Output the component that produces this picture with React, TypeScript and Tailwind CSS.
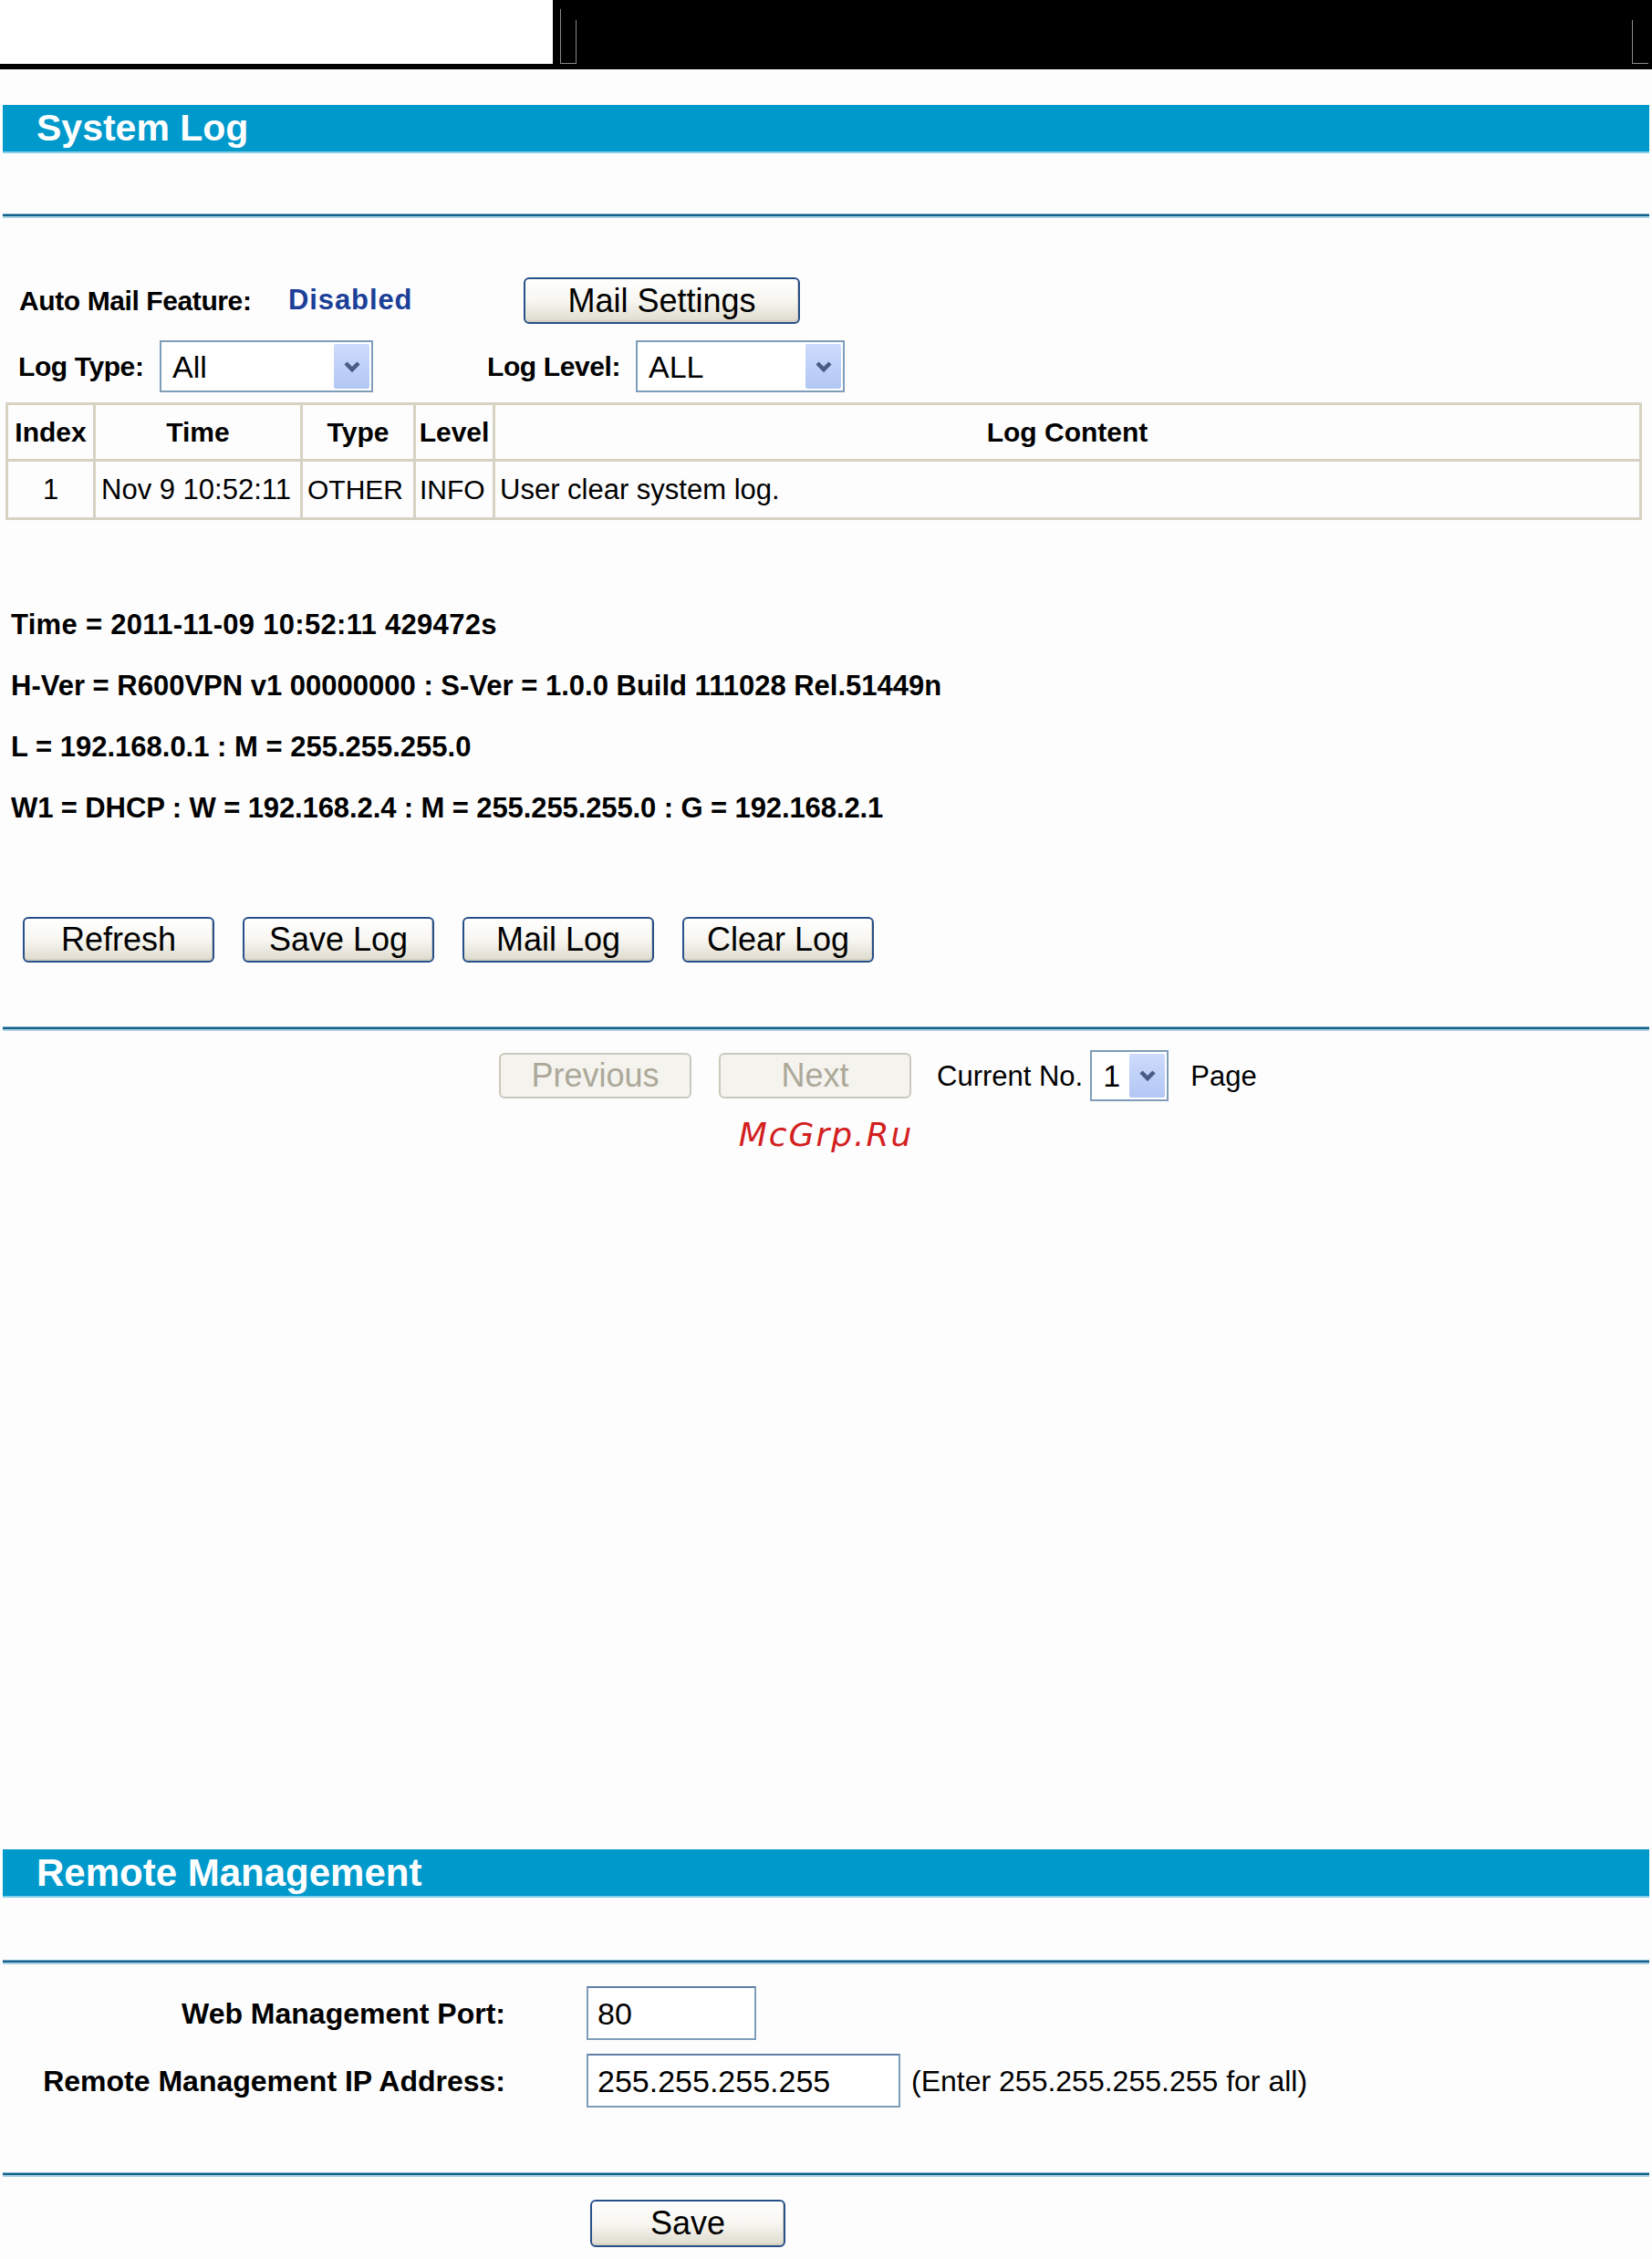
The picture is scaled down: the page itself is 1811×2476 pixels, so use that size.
import React from 'react';

// router admin pages: System Log + Remote Management

function Chevron() {
  return (
    <svg width="20" height="14" viewBox="0 0 20 14">
      <polyline points="3,3 10,10 17,3" fill="none" stroke="#4a5c86" strokeWidth="4.5" />
    </svg>
  );
}

function Select({ value, w }: { value: string; w: string }) {
  return (
    <div className={`${w} h-full border-2 border-[#7f9db9] bg-white flex items-center`}>
      <span className="flex-1 pl-[12px] text-[34px] leading-none text-black">{value}</span>
      <div className="w-[39px] h-[calc(100%-4px)] mr-[2px] rounded-[2px] bg-linear-to-b from-[#cddbfc] to-[#b3c7f4] flex items-center justify-center">
        <Chevron />
      </div>
    </div>
  );
}

function Btn({ label, w = 'w-[210px]', h = 'h-[50px]', disabled = false }: { label: string; w?: string; h?: string; disabled?: boolean }) {
  const cls = disabled
    ? 'border-[#cbc9bc] bg-[#f4f3ee] text-[#aca899]'
    : 'border-[#27508a] bg-linear-to-b from-white via-[#f7f6f1] to-[#dedbcd] text-black shadow-[inset_-1px_-2px_0_#d3d0c2]';
  return (
    <button className={`${w} ${h} shrink-0 rounded-[6px] border-2 ${cls} text-[36px] leading-none flex items-center justify-center`}>
      {label}
    </button>
  );
}

function Separator() {
  return (
    <div className="mx-[3px]">
      <div className="h-px bg-[#7fb0cb]" />
      <div className="h-[2px] bg-[#15608a]" />
      <div className="h-[2px] bg-[#a9cfe2]" />
    </div>
  );
}

function TitleBar({ title, size = 'text-[41px]' }: { title: string; size?: string }) {
  return (
    <div className="mx-[3px] h-[53px] bg-[#0099cc] border-b-2 border-[#86cfe9] flex items-center pl-[37px]">
      <span className={`${size} font-bold text-white leading-none`}>{title}</span>
    </div>
  );
}

const cell = 'border-[3px] border-[#d6d3c3] leading-none';

export default function App() {
  return (
    <div className="w-[1811px] min-h-[2476px] bg-[#fdfdfd] text-black font-['Liberation_Sans',Arial,sans-serif]">
      {/* top strip */}
      <div className="h-[76px] flex">
        <div className="w-[606px] h-full bg-white border-b-[6px] border-black" />
        <div className="flex-1 h-full bg-black relative">
          <div className="absolute left-[8px] top-[10px] w-px h-[60px] bg-[#8a8a8a]" />
          <div className="absolute left-[25px] top-[22px] w-px h-[48px] bg-[#8a8a8a]" />
          <div className="absolute left-[8px] top-[69px] w-[18px] h-px bg-[#8a8a8a]" />
          <div className="absolute right-[21px] top-[22px] w-px h-[48px] bg-[#8a8a8a]" />
          <div className="absolute right-[4px] top-[69px] w-[18px] h-px bg-[#8a8a8a]" />
        </div>
      </div>

      <div className="mt-[39px]">
        <TitleBar title="System Log" />
      </div>

      <div className="mt-[66px]">
        <Separator />
      </div>

      {/* auto mail */}
      <div className="mt-[65px] h-[51px] flex items-center pl-[21px]">
        <span className="w-[295px] text-[30px] font-bold tracking-[-0.4px]">Auto Mail Feature:</span>
        <span className="w-[258px] text-[31px] font-bold text-[#1c3f98] tracking-[0.9px]">Disabled</span>
        <Btn label="Mail Settings" w="w-[303px]" h="h-[51px]" />
      </div>

      {/* log type / level */}
      <div className="mt-[18px] h-[57px] flex items-center pl-[20px]">
        <span className="w-[155px] text-[30px] font-bold tracking-[-0.4px]">Log Type:</span>
        <Select value="All" w="w-[234px]" />
        <span className="ml-[125px] w-[163px] text-[30px] font-bold tracking-[-0.4px]">Log Level:</span>
        <Select value="ALL" w="w-[229px]" />
      </div>

      {/* log table */}
      <table className="mt-[11px] ml-[6px] w-[1794px] table-fixed border-collapse border-[3px] border-[#cfccbb]">
        <colgroup>
          <col className="w-[96px]" />
          <col className="w-[227px]" />
          <col className="w-[124px]" />
          <col className="w-[87px]" />
          <col />
        </colgroup>
        <thead>
          <tr className="h-[62px] text-[30px]">
            <th className={`${cell} font-bold`}>Index</th>
            <th className={`${cell} font-bold`}>Time</th>
            <th className={`${cell} font-bold`}>Type</th>
            <th className={`${cell} font-bold`}>Level</th>
            <th className={`${cell} font-bold`}>Log Content</th>
          </tr>
        </thead>
        <tbody>
          <tr className="h-[64px] text-[31px]">
            <td className={`${cell} text-center`}>1</td>
            <td className={`${cell} pl-[6px] whitespace-nowrap`}>Nov 9 10:52:11</td>
            <td className={`${cell} pl-[5px] text-[30px]`}>OTHER</td>
            <td className={`${cell} pl-[4px] text-[30px]`}>INFO</td>
            <td className={`${cell} pl-[5px]`}>User clear system log.</td>
          </tr>
        </tbody>
      </table>

      {/* system info */}
      <div className="mt-[81px] pl-[12px] text-[31px] font-bold leading-[67px]">
        <div className="tracking-[0.3px]">Time = 2011-11-09 10:52:11 429472s</div>
        <div>H-Ver = R600VPN v1 00000000 : S-Ver = 1.0.0 Build 111028 Rel.51449n</div>
        <div>L = 192.168.0.1 : M = 255.255.255.0</div>
        <div className="tracking-[-0.1px]">W1 = DHCP : W = 192.168.2.4 : M = 255.255.255.0 : G = 192.168.2.1</div>
      </div>

      <div className="mt-[86px] pl-[25px] flex gap-[31px]">
        <Btn label="Refresh" />
        <Btn label="Save Log" />
        <Btn label="Mail Log" />
        <Btn label="Clear Log" />
      </div>

      <div className="mt-[70px]">
        <Separator />
      </div>

      {/* paging */}
      <div className="mt-[21px] h-[56px] flex items-center pl-[547px]">
        <Btn label="Previous" w="w-[211px]" disabled />
        <div className="ml-[30px]">
          <Btn label="Next" w="w-[211px]" disabled />
        </div>
        <span className="ml-[28px] text-[31px] leading-none">Current No.</span>
        <div className="ml-[8px] h-full">
          <Select value="1" w="w-[86px]" />
        </div>
        <span className="ml-[24px] text-[31px] leading-none">Page</span>
      </div>

      <div className="mt-[17px] text-center leading-[40px] text-[36px] italic tracking-[2px] text-[#d3201f] font-['DejaVu_Sans',sans-serif]">
        McGrp.Ru
      </div>

      <div className="mt-[763px]">
        <TitleBar title="Remote Management" size="text-[42px]" />
      </div>

      <div className="mt-[68px]">
        <Separator />
      </div>

      {/* remote form */}
      <div className="mt-[24px] h-[59px] flex items-center">
        <span className="w-[554px] text-right text-[32px] font-bold">Web Management Port:</span>
        <div className="ml-[89px] w-[186px] h-full border-2 border-[#7f9db9] border-t-[#5e7fa6] bg-white flex items-center pl-[10px] text-[34px] leading-none">80</div>
      </div>
      <div className="mt-[15px] h-[59px] flex items-center">
        <span className="w-[554px] text-right text-[32px] font-bold">Remote Management IP Address:</span>
        <div className="ml-[89px] w-[344px] h-full border-2 border-[#7f9db9] border-t-[#5e7fa6] bg-white flex items-center pl-[10px] text-[34px] leading-none">255.255.255.255</div>
        <span className="ml-[12px] text-[32px] leading-none">(Enter 255.255.255.255 for all)</span>
      </div>

      <div className="mt-[71px]">
        <Separator />
      </div>

      <div className="mt-[25px] pl-[647px]">
        <Btn label="Save" w="w-[214px]" h="h-[52px]" />
      </div>
    </div>
  );
}
